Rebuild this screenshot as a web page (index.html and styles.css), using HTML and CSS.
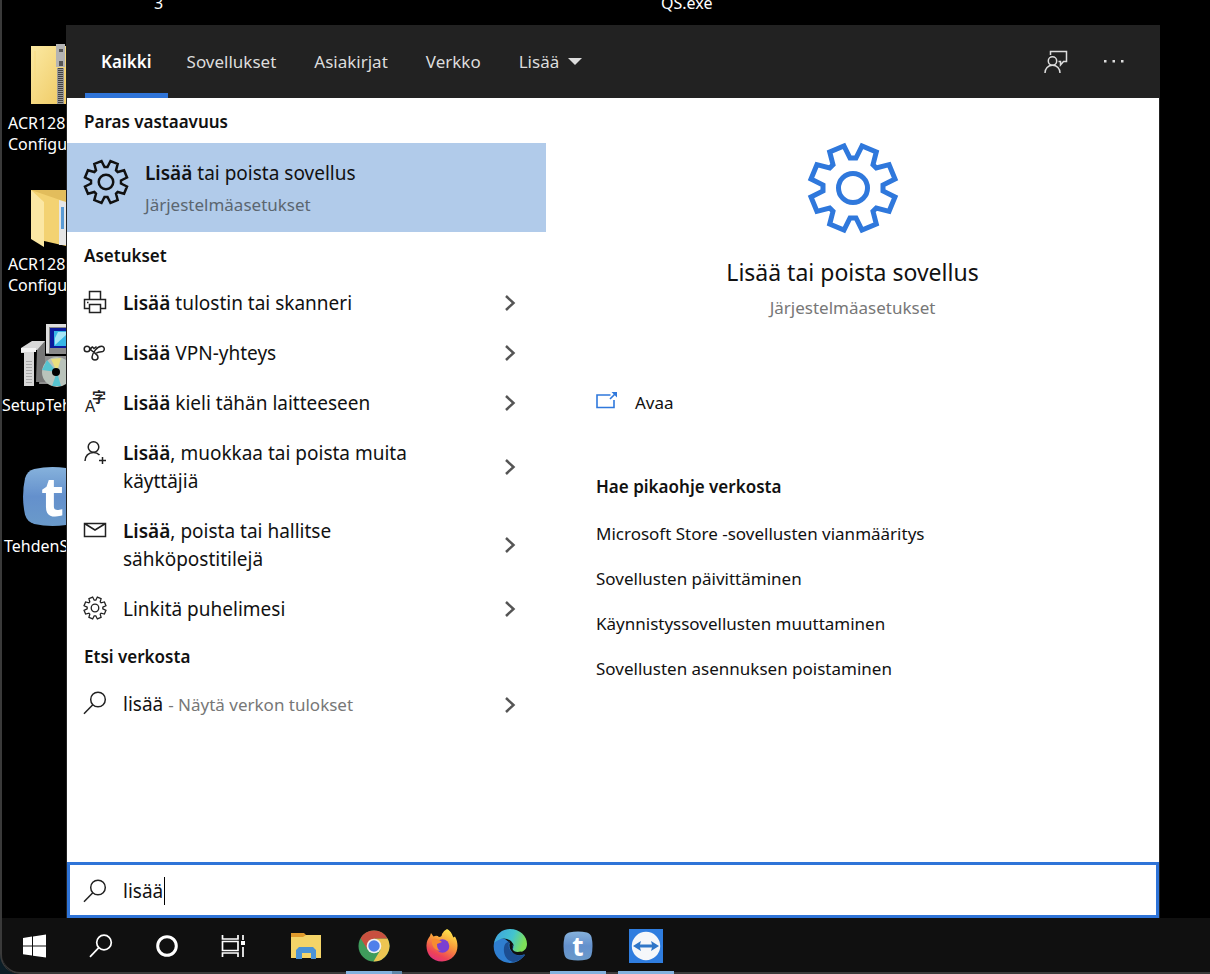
FILE: index.html
```html
<!DOCTYPE html>
<html lang="fi">
<head>
    <meta charset="UTF-8">
    <meta name="viewport" content="width=device-width, initial-scale=1.0">
    <title>Haku</title>
    <link rel="stylesheet" href="styles.css">
</head>
<body>
    <!-- shared icons -->
    <svg class="defs" aria-hidden="true">
        <symbol id="gear" viewBox="-46 -46 92 92">
            <path d="M3-30L9-42L23.3-36.1L20-23.3L23.3-20L36.1-23.3L42-9L30-3V3L42 9L36.1 23.3L23.3 20L20 23.3L23.3 36.1L9 42L3 30H-3L-9 42L-23.3 36.1L-20 23.3L-23.3 20L-36.1 23.3L-42 9L-30 3V-3L-42-9L-36.1-23.3L-23.3-20L-20-23.3L-23.3-36.1L-9-42L-3-30Z"/>
            <circle r="14.5"/>
        </symbol>
        <symbol id="search" viewBox="0 0 24 24">
            <circle cx="15" cy="8.5" r="7.3"/>
            <path d="M9.8 13.7L1 22.8"/>
        </symbol>
        <symbol id="chevron" viewBox="0 0 12 18">
            <path d="M2 2L9.5 9L2 16"/>
        </symbol>
        <symbol id="tehden" viewBox="0 0 60 60">
            <path fill="url(#tehdenBlue)" d="M12 3Q30-1 48 3Q55 5 57 12Q61 30 57 48Q55 55 48 57Q30 61 12 57Q5 55 3 48Q-1 30 3 12Q5 5 12 3Z"/>
            <text x="30" y="49" text-anchor="middle" class="logo-t">t</text>
        </symbol>
        <linearGradient id="tehdenBlue" x1="0" y1="0" x2="0" y2="1">
            <stop offset="0" stop-color="#86b2dc"/>
            <stop offset=".5" stop-color="#6490cc"/>
            <stop offset="1" stop-color="#6a9aca"/>
        </linearGradient>
        <linearGradient id="folderYellow" x1="0" y1="0" x2="1" y2="1">
            <stop offset="0" stop-color="#fbe9a2"/>
            <stop offset="1" stop-color="#efc962"/>
        </linearGradient>
    </svg>

    <div class="screen">
        <main class="desktop">
            <span class="desktop-label label-three">3</span>
            <span class="desktop-label label-qs">QS.exe</span>

            <div class="shortcuts">
                <div class="shortcut">
                    <svg viewBox="0 0 64 72">
                        <path fill="url(#folderYellow)" d="M29 5H64V63H29Z"/>
                        <path stroke="#f8dc80" d="M33 10V58"/>
                        <path fill="#b4b4b4" d="M54 3H63V26H54Z"/>
                        <path fill="#555" d="M57 8H61V11H57ZM57 20H61V25H57Z"/>
                        <path stroke="#999" stroke-width="7" d="M58.5 27V63"/>
                        <path stroke="#444" stroke-width="5" stroke-dasharray="1 1" d="M58.5 27V63"/>
                    </svg>
                    <p class="indent">ACR128<br>Configu</p>
                </div>
                <div class="shortcut">
                    <svg viewBox="0 0 64 72">
                        <path fill="#e2bd5c" d="M29 8H64V20H29Z"/>
                        <path fill="#f3d272" d="M29 8L64 20V64L29 56Z"/>
                        <path fill="#e6e6e6" d="M57 18L64 20V63H57Z"/>
                        <path fill="#5a9bd5" d="M59 25H62V47H59Z"/>
                        <path fill="#fbe7a4" d="M29 8L42 20V65L29 57Z"/>
                    </svg>
                    <p class="indent">ACR128<br>Configu</p>
                </div>
                <div class="shortcut">
                    <svg viewBox="0 0 64 72">
                        <path fill="#8a8a8a" d="M44 1H64V31H44Z"/>
                        <path fill="#dedede" d="M44 1H64V4H47V30H44Z"/>
                        <path fill="#0a1a9c" d="M48 5H64V25H48Z"/>
                        <path fill="#37b6e6" d="M52 8H64V23H52Z"/>
                        <path fill="#a5e5f6" d="M56 9H64V12L53 22V15Z"/>
                        <path fill="#8f8f8f" d="M40 33H64V61H37Z"/>
                        <path fill="#777" d="M34 18H43V59H34L35 26Z"/>
                        <path fill="#d8d8d8" d="M19 25L30 18H43L35 27H32V63H22V30H19Z"/>
                        <path fill="#f4f4f4" d="M19 25H34V29H19Z"/>
                        <path stroke="#aaa" stroke-width="6" stroke-dasharray="1 2" d="M27 38V60"/>
                        <circle cx="55" cy="49" r="15" fill="#b9c3bb"/>
                        <path fill="#e9df7e" d="M55 49L49 36L59 35Z"/>
                        <path fill="#57c4d0" d="M55 49L40 47L45 37ZM55 49L59 63L50 63Z"/>
                        <circle cx="54" cy="49" r="4" fill="#000"/>
                    </svg>
                    <p>SetupTeh</p>
                </div>
                <div class="shortcut">
                    <svg viewBox="0 0 64 72"><use href="#tehden" x="20" y="2" width="61" height="61"/></svg>
                    <p class="indent-small">TehdenS</p>
                </div>
            </div>

            <section class="search-panel">
                <header class="tabs">
                    <button class="tab active">Kaikki</button>
                    <button class="tab">Sovellukset</button>
                    <button class="tab">Asiakirjat</button>
                    <button class="tab">Verkko</button>
                    <button class="tab">Lisää <span class="arrow-down"></span></button>
                    <div class="header-actions">
                        <button aria-label="Palaute">
                            <svg class="icon" viewBox="0 0 24 24">
                                <path d="M6.500 5V1.500H22.500V11.500H19.500L16.500 15V11.500H14.500"/>
                                <circle cx="8.500" cy="11" r="4.200"/>
                                <path d="M1 23C1 18.500 4 15.300 8.500 15.300S16 18.500 16 23"/>
                            </svg>
                        </button>
                        <button aria-label="Asetukset">
                            <svg class="icon dots" viewBox="0 0 24 24"><path d="M2 10H4.500V12.500H2ZM10.500 10H13V12.500H10.500ZM19 10H21.500V12.500H19Z"/></svg>
                        </button>
                    </div>
                </header>

                <div class="content">
                    <div class="results">
                        <h2>Paras vastaavuus</h2>
                        <button class="best-match">
                            <svg class="best-icon"><use href="#gear"/></svg>
                            <span>
                                <span class="best-title"><b>Lisää</b> tai poista sovellus</span>
                                <span class="best-sub">Järjestelmäasetukset</span>
                            </span>
                        </button>

                        <h2>Asetukset</h2>
                        <button class="row">
                            <svg class="icon" viewBox="0 0 24 24">
                                <path d="M6.500 9.500V1.500H17.500V9.500M6.500 18.500H1.500V9.500H22.500V18.500H17.500M6.500 14.500H17.500V22.500H6.500Z"/>
                                <path d="M4 12.500H5.500"/>
                            </svg>
                            <span class="row-text"><b>Lisää</b> tulostin tai skanneri</span>
                            <svg class="chevron"><use href="#chevron"/></svg>
                        </button>
                        <button class="row">
                            <svg class="icon" viewBox="0 0 24 24">
                                <circle cx="4" cy="9" r="2.800"/>
                                <path d="M6.500 7.500C9 13 14.500 13 15 17A3 3 0 1 1 9 17C9.500 13 14 6.200 18.500 6.200A2.800 2.800 0 1 1 18.500 11.800C16 11.800 14 12.500 12.500 13.500M6.500 10.500L9 7M9 6.500L11 8.500L13.500 6.500"/>
                            </svg>
                            <span class="row-text"><b>Lisää</b> VPN-yhteys</span>
                            <svg class="chevron"><use href="#chevron"/></svg>
                        </button>
                        <button class="row">
                            <svg class="icon lang" viewBox="0 0 24 24">
                                <text x="2" y="22" font-size="16">A</text>
                                <text x="9" y="12" font-size="14" font-weight="700">字</text>
                            </svg>
                            <span class="row-text"><b>Lisää</b> kieli tähän laitteeseen</span>
                            <svg class="chevron"><use href="#chevron"/></svg>
                        </button>
                        <button class="row">
                            <svg class="icon" viewBox="0 0 24 24">
                                <circle cx="10.500" cy="7" r="5.300"/>
                                <path d="M2 21C2 16 5.500 12.500 10.500 12.500C13 12.500 15 13.500 16.500 15M19.500 17V24M16 20.500H23"/>
                            </svg>
                            <span class="row-text"><b>Lisää</b>, muokkaa tai poista muita käyttäjiä</span>
                            <svg class="chevron"><use href="#chevron"/></svg>
                        </button>
                        <button class="row">
                            <svg class="icon" viewBox="0 0 24 24">
                                <path d="M1.500 5.500H22.500V18.500H1.500ZM1.500 5.500L12 12L22.500 5.500"/>
                            </svg>
                            <span class="row-text"><b>Lisää</b>, poista tai hallitse sähköpostitilejä</span>
                            <svg class="chevron"><use href="#chevron"/></svg>
                        </button>
                        <button class="row">
                            <svg class="icon small-gear"><use href="#gear"/></svg>
                            <span class="row-text">Linkitä puhelimesi</span>
                            <svg class="chevron"><use href="#chevron"/></svg>
                        </button>

                        <h2>Etsi verkosta</h2>
                        <button class="row">
                            <svg class="icon"><use href="#search"/></svg>
                            <span class="row-text">lisää <small>- Näytä verkon tulokset</small></span>
                            <svg class="chevron"><use href="#chevron"/></svg>
                        </button>
                    </div>

                    <div class="preview">
                        <svg class="preview-icon"><use href="#gear"/></svg>
                        <h1>Lisää tai poista sovellus</h1>
                        <p class="preview-sub">Järjestelmäasetukset</p>
                        <button class="open">
                            <svg viewBox="0 0 22 18">
                                <path d="M14.500 4H1V16.500H18V9M14 8L20 2"/>
                                <path class="arrow-head" d="M15.500 1H21V6.500Z"/>
                            </svg>
                            Avaa
                        </button>
                        <h3>Hae pikaohje verkosta</h3>
                        <ul>
                            <li><a href="#">Microsoft Store -sovellusten vianmääritys</a></li>
                            <li><a href="#">Sovellusten päivittäminen</a></li>
                            <li><a href="#">Käynnistyssovellusten muuttaminen</a></li>
                            <li><a href="#">Sovellusten asennuksen poistaminen</a></li>
                        </ul>
                    </div>
                </div>

                <div class="search-box">
                    <svg class="icon"><use href="#search"/></svg>
                    <div class="field">
                        <input type="text" value="lisää" aria-label="Haku">
                        <span class="caret"></span>
                    </div>
                </div>
            </section>
        </main>

        <footer class="taskbar">
            <button class="system" aria-label="Aloitus">
                <svg viewBox="0 0 24 24"><path fill="#fff" d="M0 4L9 2.600V11.400H0ZM10 2.400L23 .5V11.400H10ZM0 12.600H9V21.500L0 20.200ZM10 12.600H23V23.500L10 21.700Z"/></svg>
            </button>
            <button class="system" aria-label="Etsi">
                <svg class="line"><use href="#search"/></svg>
            </button>
            <button class="system" aria-label="Cortana">
                <svg viewBox="0 0 24 24"><circle cx="12" cy="12" r="9.300" fill="none" stroke="#fff" stroke-width="3"/></svg>
            </button>
            <button class="system" aria-label="Tehtävänäkymä">
                <svg class="line" viewBox="0 0 24 24"><path d="M1.500 1V5H17V1M1.500 7.500H17V16.500H1.500ZM1.500 23V19H17V23M22 1V6M22 13V23"/><path fill="#fff" stroke="none" d="M20 7H24V11H20Z"/></svg>
            </button>

            <div class="apps">
                <button aria-label="Resurssienhallinta">
                    <svg viewBox="0 0 34 34">
                        <path fill="#e09a2c" d="M2 4H15L17 6V10H2Z"/>
                        <path fill="#f4d468" d="M2 8H14L17 6H32V29H2Z"/>
                        <path fill="#4b93d6" d="M10 18H24L27 21V30H22V24H13V30H7V21Z"/>
                    </svg>
                </button>
                <button class="running stacked" aria-label="Chrome">
                    <svg viewBox="0 0 34 34">
                        <circle cx="17" cy="17" r="15.500" fill="#3f9c5c"/>
                        <path fill="#ecc552" d="M17 9.500H30.500A15.500 15.500 0 0 1 16.500 32.500L23.500 20.700Z"/>
                        <path fill="#c8503f" d="M3.600 9.200A15.500 15.500 0 0 1 30.500 9.500H17L10.500 20.500Z"/>
                        <circle cx="17" cy="17" r="7.300" fill="#f2f2f2"/>
                        <circle cx="17" cy="17" r="5.700" fill="#4f80ea"/>
                    </svg>
                </button>
                <button aria-label="Firefox">
                    <svg viewBox="0 0 34 34">
                        <defs>
                            <linearGradient id="fox" x1=".8" y1="0" x2=".3" y2="1">
                                <stop offset="0" stop-color="#fff04e"/>
                                <stop offset=".45" stop-color="#f8983a"/>
                                <stop offset=".8" stop-color="#ee4456"/>
                                <stop offset="1" stop-color="#e0307e"/>
                            </linearGradient>
                        </defs>
                        <path fill="url(#fox)" d="M22 0C27 3 27 6 28.500 8.500L30 7.500C36 18 31 32.500 17 32.500C7 32.500 1 25 1.500 16C1.700 12 3 9.500 5 7L6 4L8.500 7.500Q12 6 14 8Q17 8 17 5Q18 2 22 0Z"/>
                        <circle cx="17.500" cy="17" r="6.800" fill="#7a3fd2"/>
                        <path fill="#f78c30" d="M7 10Q12 8 17 13L12 15Q12 21 16 22Q9 22 7 15Z"/>
                    </svg>
                </button>
                <button aria-label="Edge">
                    <svg viewBox="0 0 34 34">
                        <defs>
                            <linearGradient id="edge" x1="0" y1="0" x2="1" y2=".3">
                                <stop offset="0" stop-color="#3f9fe0"/>
                                <stop offset=".6" stop-color="#43c4cf"/>
                                <stop offset="1" stop-color="#7ddf58"/>
                            </linearGradient>
                        </defs>
                        <path fill="#2f7ed0" d="M1 14C3 8 9 9 12 10L32 26C28 31 23 34 17 34C7 34-1 26 1 14Z"/>
                        <path fill="url(#edge)" d="M1 14C3 5 9 0 17 0C27 0 34 7 34 15C34 21 29 24 24 23Q19 22 20 20Q22 16 18 12Q10 6 1 14Z"/>
                        <path fill="#1c4e92" d="M13 14C9 18 10 32 21 33C26 32 30 29 32 25C27 28 22 26 19 23C15 20 15 14 17 12Z"/>
                        <path fill="#101010" d="M17 13Q21 16 19.500 20Q21 24 28 22.500L32 25Q25 28 20 24Q15 19 17 13Z"/>
                    </svg>
                </button>
                <button class="running" aria-label="Tehden">
                    <svg viewBox="0 0 34 34"><use href="#tehden" x="2" y="2" width="30" height="30"/></svg>
                </button>
                <button class="running" aria-label="TeamViewer">
                    <svg viewBox="0 0 34 34">
                        <path fill="#2f7ddf" d="M0 0H34V34H0Z"/>
                        <circle cx="17" cy="17" r="14.200" fill="#f5f7fa"/>
                        <path fill="#2f76c8" d="M4 17L12 12L11 15.500H23L22 12L30 17L22 22L23 18.500H11L12 22Z"/>
                    </svg>
                </button>
            </div>
        </footer>
    </div>
</body>
</html>
```
FILE: styles.css
```css
* {
    box-sizing: border-box;
}
body {
    margin: 0;
    background: #0b1d26;
    font-family: "Noto Sans", "Open Sans", "Noto Sans CJK SC", sans-serif;
    color: #111;
}
h1, h2, h3, p, ul {
    margin: 0;
    padding: 0;
}
button {
    border: none;
    background: none;
    padding: 0;
    font: inherit;
    color: inherit;
    text-align: left;
    cursor: pointer;
}
svg {
    display: block;
    flex: none;
}
b {
    font-weight: 600;
}
.defs {
    position: absolute;
    width: 0;
    height: 0;
}
.logo-t {
    font-size: 52px;
    font-weight: 700;
    fill: #fff;
}

.screen {
    display: flex;
    flex-direction: column;
    min-height: 100vh;
    background: #000;
    border-left: 2px solid #3a3a3a;
    border-bottom-left-radius: 20px;
    overflow: hidden;
}

/* desktop */
.desktop {
    position: relative;
    flex: 1;
    display: flex;
    padding-right: 50px;
}
.desktop-label {
    position: absolute;
    top: -7px;
    color: #fff;
    font-size: 16px;
    line-height: 20px;
}
.label-three {
    left: 152px;
}
.label-qs {
    left: 659px;
}
.shortcuts {
    width: 64px;
    padding-top: 41px;
    overflow: hidden;
}
.shortcut {
    height: 141px;
    color: #fff;
    font-size: 16px;
    line-height: 21px;
    white-space: nowrap;
}
.shortcut svg {
    width: 64px;
    height: 72px;
}
.indent {
    padding-left: 6px;
}
.indent-small {
    padding-left: 2px;
}

/* search window */
.search-panel {
    flex: 1;
    display: flex;
    flex-direction: column;
    margin-top: 25px;
    background: #fff;
    border: solid #222;
    border-width: 0 1px;
}
.icon {
    width: 24px;
    height: 24px;
    fill: none;
    stroke: #222;
    stroke-width: 1.5;
}
.tabs {
    display: flex;
    height: 73px;
    padding: 0 33px 0 18px;
    background: #222;
    color: #ddd;
    font-size: 17px;
}
.tab {
    display: flex;
    align-items: center;
    padding: 4px 19px 0;
    border-bottom: 5px solid transparent;
}
.tab.active {
    padding: 4px 16px 0;
    color: #fff;
    font-weight: 600;
    border-bottom-color: #2f74d8;
}
.arrow-down {
    margin-left: 9px;
    border: 7px solid transparent;
    border-top-color: #ddd;
    border-bottom: none;
}
.header-actions {
    display: flex;
    align-items: center;
    gap: 34px;
    margin-left: auto;
}
.header-actions .icon {
    stroke: #ddd;
}
.header-actions .dots {
    fill: #ddd;
    stroke: none;
}

.content {
    flex: 1;
    display: flex;
}
.results {
    width: 479px;
}
.results h2 {
    padding: 2px 0 0 17px;
    font-size: 17px;
    font-weight: 600;
    line-height: 43px;
}
.best-match {
    display: flex;
    gap: 16px;
    width: 100%;
    padding: 16px 16px 15px;
    background: #b1cbea;
}
.best-icon {
    width: 46px;
    height: 46px;
    fill: none;
    stroke: #111;
    stroke-width: 5;
}
.best-title, .best-sub {
    display: block;
}
.best-title {
    margin-bottom: 6px;
    font-size: 19px;
    line-height: 28px;
}
.best-sub {
    color: #5b6670;
    font-size: 17px;
    line-height: 24px;
}
.row {
    display: flex;
    align-items: flex-start;
    gap: 16px;
    width: 100%;
    padding: 12px 30px 10px 16px;
    font-size: 19px;
    line-height: 28px;
}
.row .icon {
    margin-top: 1px;
}
.row-text {
    flex: 1;
    padding-right: 24px;
}
.row-text small {
    color: #777;
    font-size: 17px;
}
.row .small-gear {
    stroke-width: 5;
}
.row .lang {
    fill: #222;
    stroke: none;
}
.chevron {
    align-self: center;
    width: 12px;
    height: 18px;
    fill: none;
    stroke: #555;
    stroke-width: 2.5;
}

.preview {
    flex: 1;
    padding: 44px 50px 0;
}
.preview-icon {
    width: 92px;
    height: 92px;
    margin: 0 auto 22px;
    fill: none;
    stroke: #2f78dc;
    stroke-width: 5;
}
.preview h1 {
    font-size: 23px;
    font-weight: 400;
    line-height: 32px;
    text-align: center;
}
.preview-sub {
    margin: 8px 0 71px;
    color: #777;
    font-size: 17px;
    line-height: 24px;
    text-align: center;
}
.open {
    display: flex;
    gap: 17px;
    font-size: 17px;
    line-height: 24px;
}
.open svg {
    width: 22px;
    height: 18px;
    fill: none;
    stroke: #2f78dc;
    stroke-width: 1.6;
}
.open .arrow-head {
    fill: #2f78dc;
    stroke: none;
}
.preview h3 {
    margin: 60px 0 12px;
    font-size: 17px;
    font-weight: 600;
    line-height: 24px;
}
.preview ul {
    list-style: none;
}
.preview a {
    display: block;
    color: #111;
    font-size: 17px;
    line-height: 45px;
    text-decoration: none;
}

.search-box {
    display: flex;
    align-items: center;
    gap: 16px;
    height: 56px;
    padding: 1px 13px 0;
    border: 3px solid #2f74d8;
}
.field {
    position: relative;
    flex: 1;
}
.field input {
    display: block;
    width: 100%;
    padding: 0;
    border: none;
    outline: none;
    background: none;
    color: #111;
    font: inherit;
    font-size: 19px;
    line-height: 28px;
    caret-color: transparent;
}
.caret {
    position: absolute;
    top: 0;
    left: 41px;
    width: 1px;
    height: 28px;
    background: #000;
}

/* taskbar */
.taskbar {
    display: flex;
    height: 56px;
    background: #101010;
    border-bottom-left-radius: 18px;
    box-shadow: inset 0 -2px #3a3a3a;
}
.taskbar svg {
    width: 34px;
    height: 34px;
}
.taskbar .system svg {
    width: 24px;
    height: 24px;
}
.taskbar .line {
    fill: none;
    stroke: #fff;
    stroke-width: 1.7;
}
.taskbar button {
    display: flex;
    align-items: center;
    justify-content: center;
    width: 56px;
    padding-top: 2px;
    border-bottom: 3px solid transparent;
}
.taskbar .system {
    width: 66px;
}
.apps {
    display: flex;
    gap: 12px;
    padding-left: 12px;
}
.taskbar .running {
    border-bottom-color: #82b1de;
}
.taskbar .stacked {
    border-image: linear-gradient(to right, #82b1de 78%, #5f87a8 78%) 3;
    border-top: none;
    border-left: none;
    border-right: none;
}
```
